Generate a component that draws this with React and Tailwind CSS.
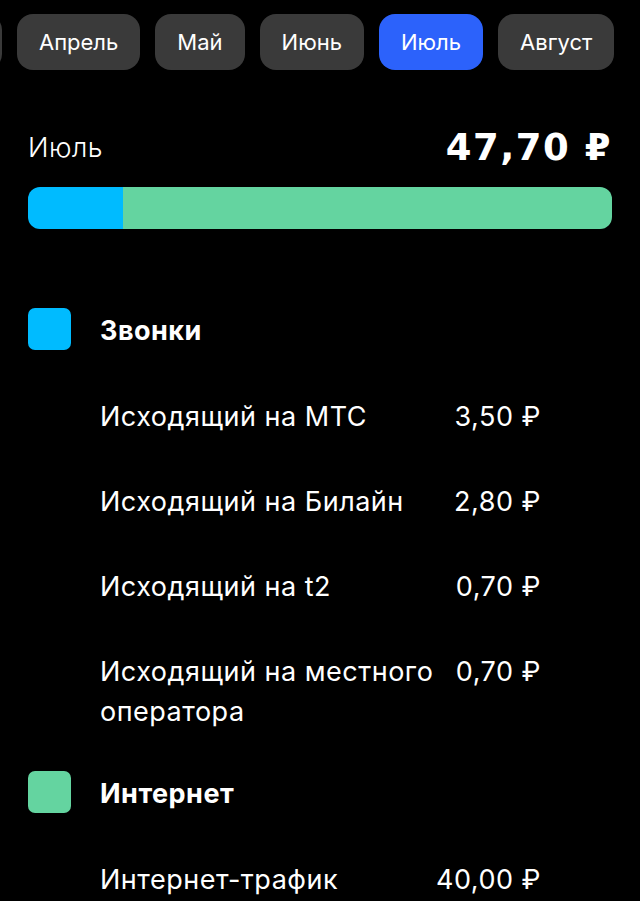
import React from "react";

const months = ["Март", "Апрель", "Май", "Июнь", "Июль", "Август"];

const groups = [
  {
    name: "Звонки",
    color: "bg-[#00bbff]",
    items: [
      ["Исходящий на МТС", "3,50 ₽"],
      ["Исходящий на Билайн", "2,80 ₽"],
      ["Исходящий на t2", "0,70 ₽"],
      ["Исходящий на местного оператора", "0,70 ₽"],
    ],
  },
  {
    name: "Интернет",
    color: "bg-[#64d4a0]",
    items: [["Интернет-трафик", "40,00 ₽"]],
  },
];

export default function App() {
  return (
    <div
      className="min-h-screen bg-black text-white overflow-hidden"
      style={{ fontFamily: "Inter, 'Noto Sans', sans-serif" }}
    >
      <div className="flex gap-[15px] pt-[14px] ml-[-98px] whitespace-nowrap">
        {months.map((m) => (
          <div
            key={m}
            className={
              "h-[56px] px-[22px] rounded-[16px] flex items-center text-[22px] shrink-0 " +
              (m === "Июль" ? "bg-[#2c62fb]" : "bg-[#3a3a3a]")
            }
          >
            {m}
          </div>
        ))}
      </div>

      <div className="px-[28px] mt-[58px]">
        <div className="flex items-center justify-between h-[40px]">
          <span className="text-[27px] font-light tracking-[0.5px]">Июль</span>
          <span
            className="text-[37px] font-black tracking-[1.5px]"
            style={{ fontFamily: "'DejaVu Sans', sans-serif" }}
          >
            47,70 ₽
          </span>
        </div>
        <div className="mt-[19px] h-[42px] rounded-[12px] overflow-hidden flex">
          <div className="w-[95px] bg-[#00bbff]" />
          <div className="flex-1 bg-[#64d4a0]" />
        </div>
      </div>

      <div className="mt-[79px] px-[28px]">
        <div className="flex flex-col gap-[39px]">
          {groups.map((g) => (
            <div key={g.name}>
              <div className="flex items-center gap-[29px] h-[42px]">
                <div className={"w-[43px] h-[42px] rounded-[7px] " + g.color} />
                <span className="text-[27px] font-bold tracking-[0.5px] pt-[4px]">{g.name}</span>
              </div>
              <div className="pl-[72px] pr-[71px] mt-[47px] flex flex-col gap-[45px]">
                {g.items.map(([label, value]) => (
                  <div
                    key={label}
                    className="flex items-start gap-[14px] text-[27px] leading-[40px] tracking-[0.5px]"
                  >
                    <span className="flex-1 min-w-0">{label}</span>
                    <span className="shrink-0">{value}</span>
                  </div>
                ))}
              </div>
            </div>
          ))}
        </div>
      </div>
    </div>
  );
}
